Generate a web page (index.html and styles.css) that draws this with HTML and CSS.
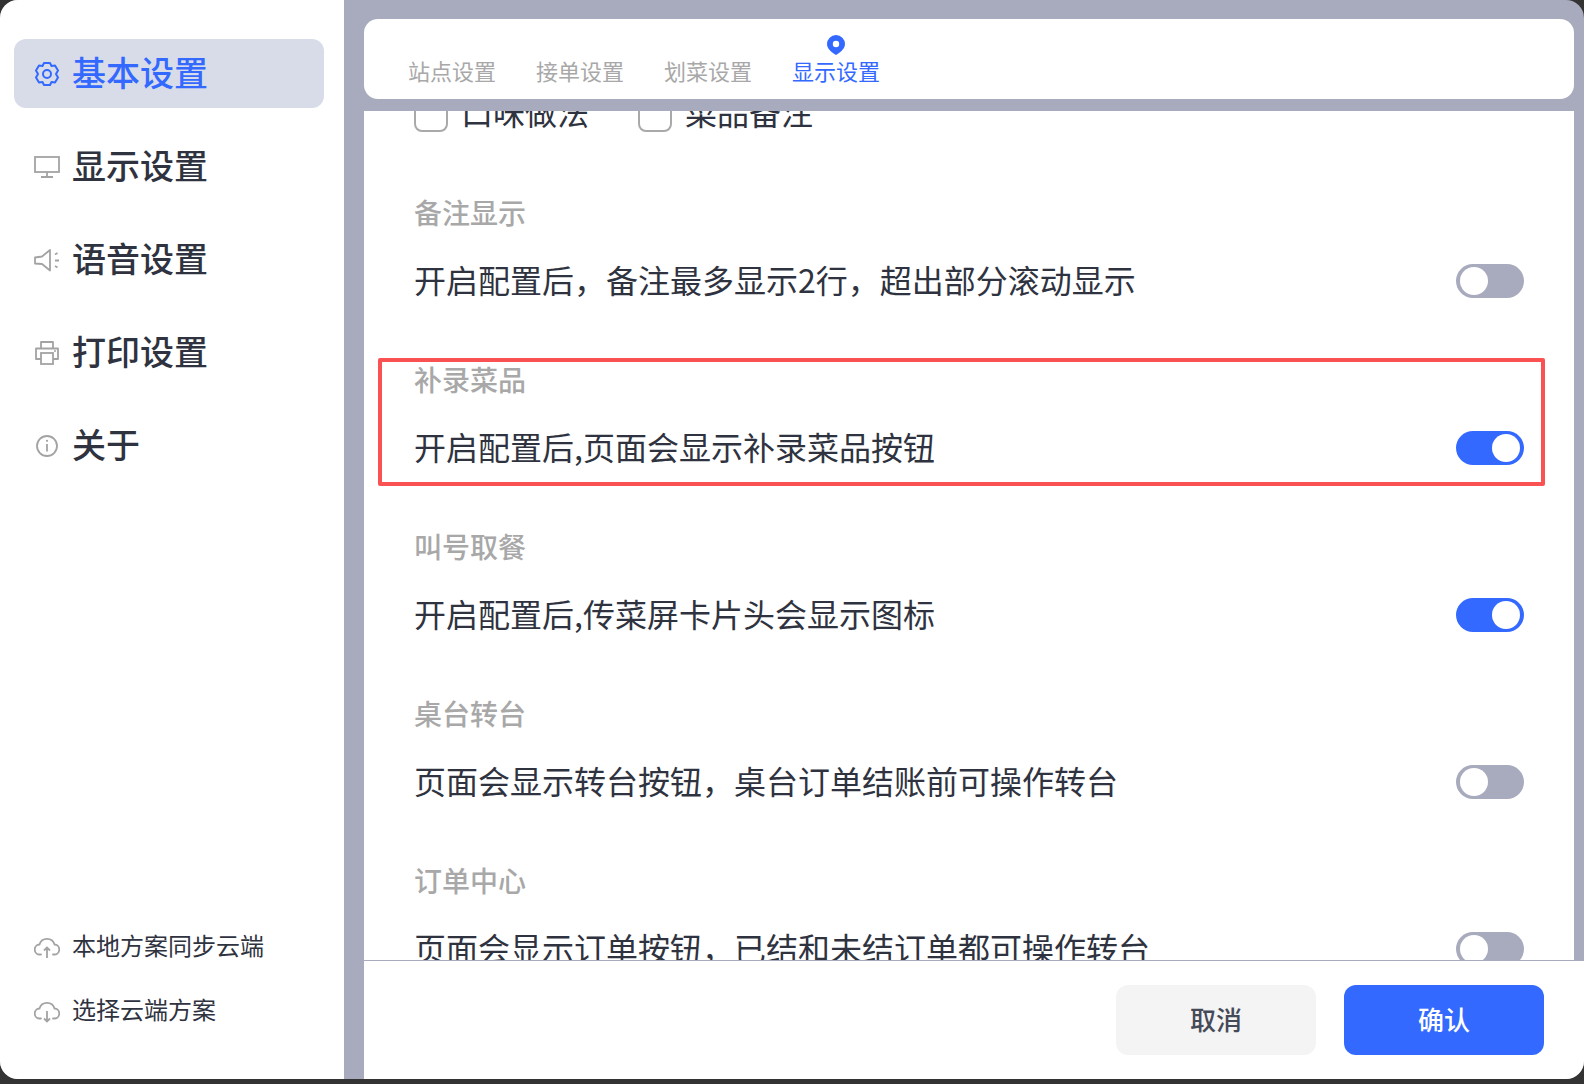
FILE: index.html
```html
<!DOCTYPE html>
<html lang="zh-CN">
<head>
<meta charset="utf-8">
<title>基本设置</title>
<link rel="stylesheet" href="styles.css">
</head>
<body>
<div class="modal">
  <aside class="sidebar">
    <nav class="menu">
      <div class="menu-item active">
        <svg class="menu-icon" viewBox="0 0 26 26"><path d="M10 2h6l1.500 3 3.500-.5 3 5-2 3.500 2 3.500-3 5-3.500-.5-1.500 3h-6l-1.500-3-3.500.5-3-5 2-3.500-2-3.500 3-5 3.500.5z" fill="none" stroke="currentColor" stroke-width="2" stroke-linejoin="round"/><circle cx="13" cy="13" r="4" fill="none" stroke="currentColor" stroke-width="2"/></svg>
        <span class="label">基本设置</span>
      </div>
      <div class="menu-item">
        <svg class="menu-icon" viewBox="0 0 26 26"><rect x="1" y="3" width="24" height="15" fill="none" stroke="currentColor" stroke-width="1.800"/><path d="M13 18v5M7 23h12" fill="none" stroke="currentColor" stroke-width="1.800"/></svg>
        <span class="label">显示设置</span>
      </div>
      <div class="menu-item">
        <svg class="menu-icon" viewBox="0 0 26 26"><path d="M1 10.500v6l7 .5 8 6.500V3l-8 6.500z" fill="none" stroke="currentColor" stroke-width="1.800" stroke-linejoin="round"/><path d="M21 7.500l2.500-1.500M21 13.500h4M21 19l2.500 1.500" fill="none" stroke="currentColor" stroke-width="1.800"/></svg>
        <span class="label">语音设置</span>
      </div>
      <div class="menu-item">
        <svg class="menu-icon" viewBox="0 0 26 26"><path d="M7 8V2h12v6M7 19H2V8.500h22V19h-5" fill="none" stroke="currentColor" stroke-width="1.800" stroke-linejoin="round"/><rect x="7" y="13" width="12" height="11" fill="none" stroke="currentColor" stroke-width="1.800"/><circle cx="21" cy="11" r="1" fill="currentColor"/></svg>
        <span class="label">打印设置</span>
      </div>
      <div class="menu-item">
        <svg class="menu-icon" viewBox="0 0 26 26"><circle cx="13" cy="13" r="10" fill="none" stroke="currentColor" stroke-width="1.800"/><path d="M13 11v7.500" fill="none" stroke="currentColor" stroke-width="1.800"/><circle cx="13" cy="7.800" r="1.100" fill="currentColor"/></svg>
        <span class="label">关于</span>
      </div>
    </nav>
    <div class="cloud-links">
      <div class="cloud-link">
        <svg class="menu-icon" viewBox="0 0 26 26"><path d="M7 20.500H6a5 5 0 0 1-.5-10A7.800 7.800 0 0 1 20.500 10.500a5 5 0 0 1-.5 10h-1" fill="none" stroke="currentColor" stroke-width="1.800" stroke-linecap="round"/><path d="M13 24v-10M10 16.500l3-3 3 3" fill="none" stroke="currentColor" stroke-width="1.800"/></svg>
        <span class="label">本地方案同步云端</span>
      </div>
      <div class="cloud-link">
        <svg class="menu-icon" viewBox="0 0 26 26"><path d="M7 20.500H6a5 5 0 0 1-.5-10A7.800 7.800 0 0 1 20.500 10.500a5 5 0 0 1-.5 10h-1" fill="none" stroke="currentColor" stroke-width="1.800" stroke-linecap="round"/><path d="M13 13v10M10 20.500l3 3 3-3" fill="none" stroke="currentColor" stroke-width="1.800"/></svg>
        <span class="label">选择云端方案</span>
      </div>
    </div>
  </aside>
  <main class="main">
    <header class="tabs">
      <span class="tab">站点设置</span>
      <span class="tab">接单设置</span>
      <span class="tab">划菜设置</span>
      <span class="tab current">
        <svg class="pin" viewBox="0 0 18 20"><path fill-rule="evenodd" d="M9 0a9 9 0 0 1 9 9c0 4-3.500 7.800-9 11C3.500 16.800 0 13 0 9a9 9 0 0 1 9-9zm0 5.800a3.200 3.200 0 1 0 0 6.400 3.200 3.200 0 0 0 0-6.400z" fill="currentColor"/></svg>
        显示设置
      </span>
    </header>
    <section class="content">
      <div class="checks">
        <label class="check"><i class="box"></i><span class="check-text">口味做法</span></label>
        <label class="check"><i class="box"></i><span class="check-text">菜品备注</span></label>
      </div>
      <div class="group">
        <h3 class="group-title">备注显示</h3>
        <div class="row"><span class="row-text">开启配置后，备注最多显示2行，超出部分滚动显示</span><i class="switch"></i></div>
      </div>
      <div class="group marked">
        <h3 class="group-title">补录菜品</h3>
        <div class="row"><span class="row-text">开启配置后,页面会显示补录菜品按钮</span><i class="switch on"></i></div>
      </div>
      <div class="group">
        <h3 class="group-title">叫号取餐</h3>
        <div class="row"><span class="row-text">开启配置后,传菜屏卡片头会显示图标</span><i class="switch on"></i></div>
      </div>
      <div class="group">
        <h3 class="group-title">桌台转台</h3>
        <div class="row"><span class="row-text">页面会显示转台按钮，桌台订单结账前可操作转台</span><i class="switch"></i></div>
      </div>
      <div class="group">
        <h3 class="group-title">订单中心</h3>
        <div class="row"><span class="row-text">页面会显示订单按钮，已结和未结订单都可操作转台</span><i class="switch"></i></div>
      </div>
    </section>
    <footer class="footer">
      <button class="btn cancel">取消</button>
      <button class="btn confirm">确认</button>
    </footer>
  </main>
</div>
</body>
</html>
```
FILE: styles.css
```css
* { box-sizing: border-box; }
html, body { margin: 0; padding: 0; height: 100%; }
body {
  background: #333333;
  font-family: "Noto Sans CJK SC", "Noto Sans", sans-serif;
  color: #2f3340;
  overflow: hidden;
}
.modal {
  display: flex;
  width: 1584px;
  height: 1079px;
  background: #a8aabd;
  border-radius: 18px;
  overflow: hidden;
}
.sidebar {
  width: 344px;
  flex: none;
  background: #fff;
  display: flex;
  flex-direction: column;
  justify-content: space-between;
  padding: 39px 20px 52px 14px;
}
.menu { display: flex; flex-direction: column; gap: 24px; }
.menu-item {
  height: 69px;
  display: flex;
  align-items: center;
  gap: 12px;
  padding-left: 20px;
  border-radius: 12px;
  font-size: 34px;
  font-weight: 500;
  line-height: 1;
}
.menu-item .label { padding-bottom: 4px; }
.menu-item .menu-icon { color: #a3a3a3; }
.menu-item.active { background: #d8dce9; color: #3369ff; }
.menu-item.active .menu-icon { color: #3369ff; }
.menu-icon { width: 26px; height: 26px; flex: none; display: block; }
.cloud-links { display: flex; flex-direction: column; gap: 32px; padding-left: 20px; }
.cloud-link {
  height: 32px;
  display: flex;
  align-items: center;
  gap: 12px;
  font-size: 24px;
  line-height: 1;
}
.cloud-link .label { padding-bottom: 4px; }
.cloud-link .menu-icon { color: #a3a3a3; }

.main {
  flex: 1;
  min-width: 0;
  display: flex;
  flex-direction: column;
  padding-top: 19px;
}
.tabs {
  flex: none;
  height: 80px;
  margin: 0 10px 12px 20px;
  padding: 0 0 13px 44px;
  background: #fff;
  border-radius: 14px;
  display: flex;
  align-items: flex-end;
  gap: 40px;
}
.tab {
  position: relative;
  font-size: 22px;
  line-height: 32px;
  color: #a8a8a8;
}
.tab.current { color: #3369ff; }
.pin {
  position: absolute;
  top: -19px;
  left: 35px;
  width: 18px;
  height: 20px;
}
.content {
  flex: 1;
  min-height: 0;
  margin: 0 10px 0 20px;
  background: #fff;
  overflow: hidden;
  padding: 0 50px;
}
.checks {
  display: flex;
  gap: 49px;
  margin: -13px 0 61px;
}
.check {
  display: flex;
  align-items: center;
  gap: 13px;
  height: 34px;
  font-size: 32px;
  line-height: 1;
}
.check-text { padding-bottom: 8px; }
.box {
  display: block;
  width: 34px;
  height: 34px;
  border: 2px solid #a9a9a9;
  border-radius: 8px;
}
.group { position: relative; margin-bottom: 57px; }
.group-title {
  margin: 0 0 26px;
  height: 40px;
  font-size: 28px;
  line-height: 38px;
  font-weight: 500;
  color: #a8a8a8;
}
.row {
  height: 44px;
  display: flex;
  align-items: center;
  justify-content: space-between;
  font-size: 32px;
  line-height: 1;
  white-space: nowrap;
}
.row-text { padding-bottom: 5px; }
.marked::after {
  content: "";
  position: absolute;
  top: -2px;
  left: -36px;
  right: -21px;
  bottom: -16px;
  border: 4px solid #fa5252;
  border-radius: 2px;
  pointer-events: none;
}
.switch {
  display: block;
  position: relative;
  flex: none;
  width: 68px;
  height: 34px;
  border-radius: 17px;
  background: #a8aabd;
}
.switch::after {
  content: "";
  position: absolute;
  top: 3px;
  left: 4px;
  width: 28px;
  height: 28px;
  border-radius: 50%;
  background: #fff;
}
.switch.on { background: #3369ff; }
.switch.on::after { left: 36px; }
.footer {
  flex: none;
  height: 119px;
  background: #fff;
  border-top: 1px solid #a8aabd;
  margin-left: 20px;
  padding: 24px 40px 0 0;
  display: flex;
  justify-content: flex-end;
  align-items: flex-start;
  gap: 28px;
}
.btn {
  width: 200px;
  height: 70px;
  border: 0;
  border-radius: 12px;
  padding: 0 0 2px;
  font-family: inherit;
  font-size: 26px;
  font-weight: 500;
  line-height: 1;
}
.cancel { background: #f4f4f5; color: #454a57; }
.confirm { background: #3369ff; color: #fff; }
```
